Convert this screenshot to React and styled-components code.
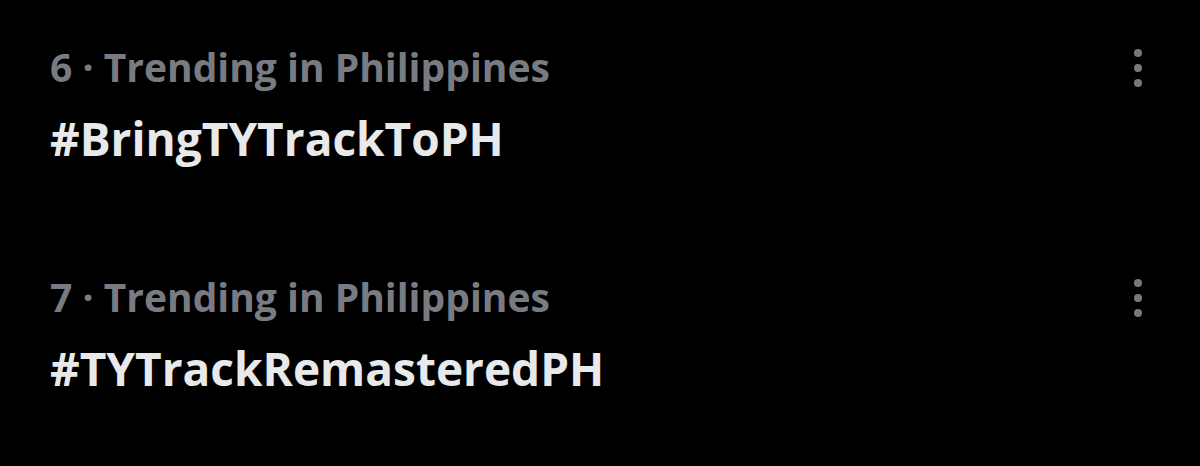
import React from "react";
import styled, { createGlobalStyle } from "styled-components";

const GlobalStyle = createGlobalStyle`
  html, body {
    margin: 0;
    padding: 0;
    background: #000;
  }
`;

const trends = [
  { rank: 6, place: "Philippines", tag: "#BringTYTrackToPH" },
  { rank: 7, place: "Philippines", tag: "#TYTrackRemasteredPH" },
];

const App = () => {
  return (
    <Wrapper>
      <GlobalStyle />
      {trends.map((trend) => (
        <Trend key={trend.rank}>
          <Text>
            <Meta>{`${trend.rank} · Trending in ${trend.place}`}</Meta>
            <Tag>{trend.tag}</Tag>
          </Text>
          <More aria-label="More">
            <Dot />
            <Dot />
            <Dot />
          </More>
        </Trend>
      ))}
    </Wrapper>
  );
};

export default App;

const Wrapper = styled.ul`
  margin: 0;
  padding: 42px 0 0 50px;
  width: 1200px;
  height: 466px;
  box-sizing: border-box;
  list-style: none;
  background: #000;
  font-family: "Open Sans", "Noto Sans", sans-serif;
  overflow: hidden;
`;

const Trend = styled.li`
  display: flex;
  justify-content: space-between;
  align-items: flex-start;
  height: 230px;
  padding-right: 58px;
`;

const Text = styled.div`
  display: flex;
  flex-direction: column;
`;

const Meta = styled.span`
  font-size: 39px;
  font-weight: 700;
  line-height: 50px;
  color: #787c82;
`;

const Tag = styled.span`
  margin-top: 17px;
  font-size: 46px;
  font-weight: 700;
  line-height: 58px;
  color: #e7e9ea;
`;

const More = styled.button`
  display: flex;
  flex-direction: column;
  gap: 7px;
  margin-top: 7px;
  padding: 0;
  border: 0;
  background: none;
`;

const Dot = styled.span`
  width: 8px;
  height: 8px;
  border-radius: 50%;
  background: #76797d;
`;
